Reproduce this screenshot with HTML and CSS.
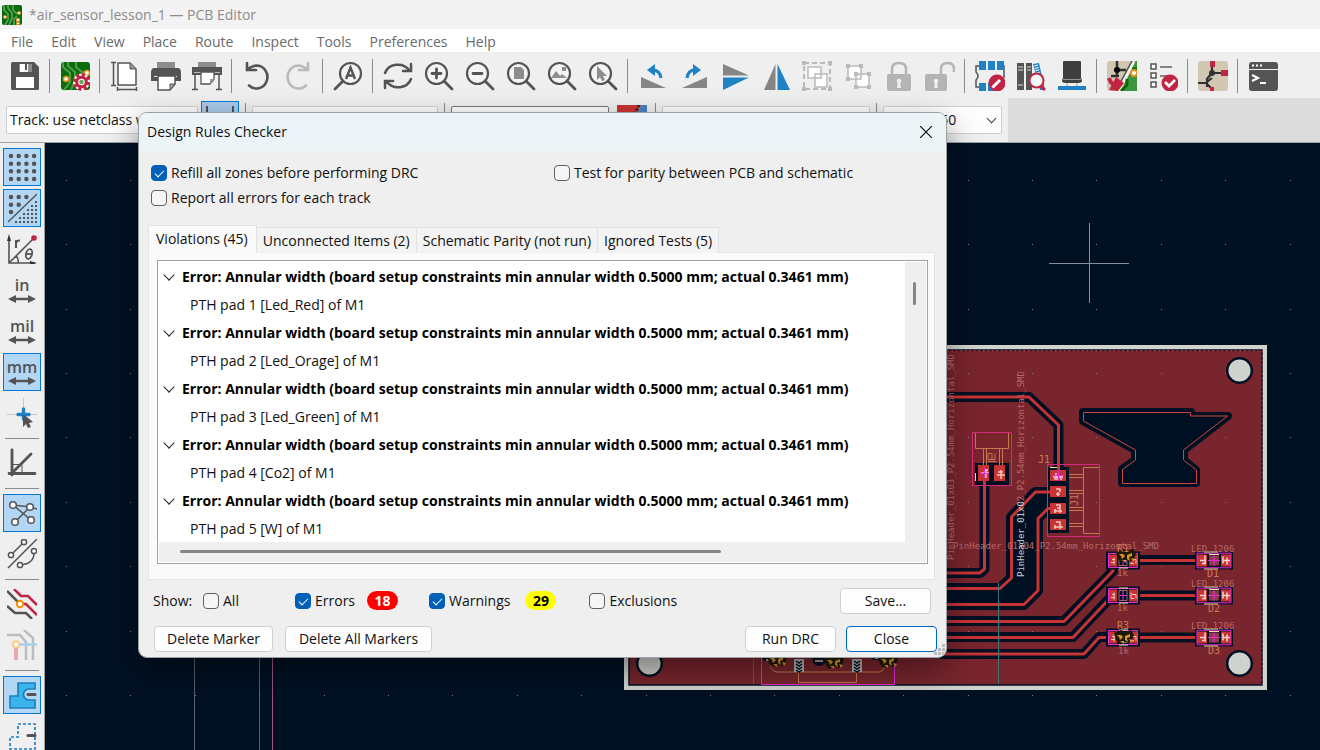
FILE: index.html
```html
<!DOCTYPE html>
<html lang="en">
<head>
<meta charset="utf-8">
<title>*air_sensor_lesson_1 — PCB Editor</title>
<link rel="stylesheet" href="styles.css">
</head>
<body>
<div class="app">
  <header class="titlebar">
    <svg class="app-icon" viewBox="0 0 20 20"><rect width="20" height="20" rx="2" fill="#0b6a0b"/><g fill="none" stroke="#5cab5c" stroke-width="1.5"><path d="M2 0v5l4 4v6l-3 5M6 0v3l4 5v5l-3 7M11 0v5l4 4M12 20v-6l3-3"/></g><g fill="#fff" stroke="#e08a1a"><circle cx="3" cy="12" r="1.5"/><circle cx="17" cy="8" r="1.5"/><path d="M14.500 13.500h3v3h-3zM14.500 17.500h3v2h-3z"/></g></svg>
    <span>*air_sensor_lesson_1 — PCB Editor</span>
  </header>
  <nav class="menubar">
    <button>File</button><button>Edit</button><button>View</button><button>Place</button><button>Route</button><button>Inspect</button><button>Tools</button><button>Preferences</button><button>Help</button>
  </nav>

  <div class="toolbar">
    <button class="tool" aria-label="Save"><svg viewBox="0 0 30 30"><path fill="#545454" fill-rule="evenodd" d="M1 2.500Q1 1 2.500 1H24l5 5v21.500q0 1.500-1.500 1.500h-25Q1 29 1 27.500zM9 3v8h13V3zM6 16v11h18V16z"/><path fill="#fff" d="M6 16h18v11H6z"/><path fill="#8d8d8d" d="M9 3h13v8H9z"/><path fill="#fff" d="M10 3h8v8h-8z"/><path fill="#545454" d="M15 3h2v6h-2z"/></svg></button>
    <span class="sep"></span>
    <button class="tool" aria-label="Board setup"><svg viewBox="0 0 30 30"><rect x="1" y="1" width="29" height="28" rx="3" fill="#0a6d0a"/><g fill="none" stroke="#4f9c4f" stroke-width="2"><path d="M3 1v5l7 6v9l-6 8M8 1v4l7 6v8l-4 10M16 1v5l6 5h8"/></g><g fill="#fff" stroke="#e8941a" stroke-width="1.500"><circle cx="6" cy="18" r="2.500"/><circle cx="27" cy="12" r="2.500"/></g><circle cx="21.500" cy="21" r="8.500" fill="#fff"/><circle cx="21.500" cy="21" r="7" fill="none" stroke="#c22443" stroke-width="3.500" stroke-dasharray="3.200 2.300"/><circle cx="21.500" cy="21" r="4.800" fill="#fff" stroke="#c22443" stroke-width="3"/><circle cx="21.500" cy="21" r="2.300" fill="#65a965"/></svg></button>
    <span class="sep"></span>
    <button class="tool" aria-label="Page settings"><svg viewBox="0 0 30 30"><g fill="none" stroke="#545454"><path fill="#fff" stroke-width="1.500" d="M8 2h12l6 6v16H8z"/><path d="M20 2v6h6" fill="#999"/><path d="M3.500 1v24M1 1.500h5M1 24.500h5M7 28.500h20M7.500 26v4M26.500 26v4" stroke-width="1.500"/></g></svg></button>
    <button class="tool" aria-label="Print"><svg viewBox="0 0 30 30"><path fill="#8d8d8d" d="M6 1h18v6H6z"/><path fill="#545454" d="M0 12q0-5 3-5h24q3 0 3 5v8H0z"/><path d="M3 15.500h23" stroke="#eee"/><path fill="#fff" stroke="#545454" stroke-width="1.500" d="M7 15h17v8l-5 6H7z"/><path fill="#aaa" stroke="#545454" d="M24 23h-5v6z"/></svg></button>
    <button class="tool" aria-label="Plot"><svg viewBox="0 0 30 30"><path fill="#8d8d8d" d="M6 1h18v5H6z"/><path fill="#545454" d="M0 6h30v8H0z"/><path d="M2 11.500h26" stroke="#bbb"/><path fill="none" stroke="#545454" stroke-width="1.500" d="M3 13v16M27 13v16M0 28.500h6M24 28.500h6"/><path fill="#fff" stroke="#545454" stroke-width="1.300" d="M9 11h13v7l-4 5H9z"/><path fill="#999" d="M18 18h4l-4 5z"/></svg></button>
    <span class="sep"></span>
    <button class="tool" aria-label="Undo"><svg viewBox="0 0 30 30"><path fill="none" stroke="#545454" stroke-width="2.600" stroke-linecap="round" d="M5 2v7h9M5 9Q10 4.500 15 4.500a11 11.500 0 1 1-8 20"/></svg></button>
    <button class="tool" aria-label="Redo" disabled><svg viewBox="0 0 30 30"><path fill="none" stroke="#bababa" stroke-width="2.600" stroke-linecap="round" d="M25 2v7h-9M25 9Q20 4.500 15 4.500a11 11.500 0 1 0 8 20"/></svg></button>
    <span class="sep"></span>
    <button class="tool" aria-label="Find"><svg viewBox="0 0 30 30"><circle cx="17.500" cy="12.500" r="10.500" fill="#f4f4f4" stroke="#545454" stroke-width="2.200"/><path stroke="#545454" stroke-width="2.800" stroke-linecap="round" d="M10 20l-8 8"/><path fill="none" stroke="#545454" stroke-width="2.400" d="M13 18l4.500-11.500L22 18M14.500 14.500h6"/></svg></button>
    <span class="sep"></span>
    <button class="tool" aria-label="Refresh"><svg viewBox="0 0 30 30"><g fill="none" stroke="#545454" stroke-width="2.500" stroke-linecap="round"><path d="M2 12A13.500 12 0 0 1 26 9M28 3v7h-8M28 18A13.500 12 0 0 1 4 21M2 27v-7h8"/></g></svg></button>
    <button class="tool" aria-label="Zoom in"><svg viewBox="0 0 30 30"><circle cx="12.500" cy="12.500" r="10.500" fill="#f4f4f4" stroke="#545454" stroke-width="2.200"/><path stroke="#545454" stroke-width="2.800" stroke-linecap="round" d="M20 20l8 8M8 12.500h9M12.500 8v9"/></svg></button>
    <button class="tool" aria-label="Zoom out"><svg viewBox="0 0 30 30"><circle cx="12.500" cy="12.500" r="10.500" fill="#f4f4f4" stroke="#545454" stroke-width="2.200"/><path stroke="#545454" stroke-width="2.800" stroke-linecap="round" d="M20 20l8 8M8 12.500h9"/></svg></button>
    <button class="tool" aria-label="Zoom to fit"><svg viewBox="0 0 30 30"><circle cx="12.500" cy="12.500" r="10.500" fill="#f4f4f4" stroke="#545454" stroke-width="2.200"/><path stroke="#545454" stroke-width="2.800" stroke-linecap="round" d="M20 20l8 8"/><path fill="#8d8d8d" d="M8 6h7l3 3v9H8z"/></svg></button>
    <button class="tool" aria-label="Zoom to objects"><svg viewBox="0 0 30 30"><circle cx="12.500" cy="12.500" r="10.500" fill="#f4f4f4" stroke="#545454" stroke-width="2.200"/><path stroke="#545454" stroke-width="2.800" stroke-linecap="round" d="M20 20l8 8"/><path fill="#8d8d8d" d="M4 17l5-7 4 5 2-2 5 4zM15 6h4v4h-4z"/></svg></button>
    <button class="tool" aria-label="Zoom to selection"><svg viewBox="0 0 30 30"><circle cx="12.500" cy="12.500" r="10.500" fill="#f4f4f4" stroke="#545454" stroke-width="2.200"/><path stroke="#545454" stroke-width="2.800" stroke-linecap="round" d="M20 20l8 8"/><path fill="#8d8d8d" d="M9 5v14l3-3 2 4 3-1-2-4h4z"/></svg></button>
    <span class="sep"></span>
    <button class="tool" aria-label="Rotate counterclockwise"><svg viewBox="0 0 30 30"><path fill="#858585" d="M3 16v11h25z"/><path fill="none" stroke="#1e82c5" stroke-width="3" d="M23 17Q22 9 14 9"/><path fill="#1e82c5" d="M17 3v12l-8-6z"/></svg></button>
    <button class="tool" aria-label="Rotate clockwise"><svg viewBox="0 0 30 30"><path fill="#858585" d="M28 16v11H3z"/><path fill="none" stroke="#1e82c5" stroke-width="3" d="M8 17Q9 9 16 9"/><path fill="#1e82c5" d="M14 3v12l8-6z"/></svg></button>
    <button class="tool" aria-label="Flip vertically"><svg viewBox="0 0 30 30"><path fill="#858585" d="M3 3v11.500h26z"/><path fill="#1e82c5" d="M3 29V16.500h26z"/></svg></button>
    <button class="tool" aria-label="Mirror"><svg viewBox="0 0 30 30"><path fill="#858585" d="M3 29h11.500V3z"/><path fill="#1e82c5" d="M29 29H16.500V3z"/></svg></button>
    <button class="tool" aria-label="Group" disabled><svg viewBox="0 0 30 30"><g fill="#fff" stroke="#bababa" stroke-width="1.500"><path fill="none" stroke-width="2" stroke-dasharray="5 3" d="M2 2h26v26H2z"/><path d="M6 6h13v11H6zM13 13h12v13H13z"/></g><path fill="#bababa" d="M0 0h4v4H0zM26 0h4v4h-4zM0 26h4v4H0zM26 26h4v4h-4z"/></svg></button>
    <button class="tool" aria-label="Ungroup" disabled><svg viewBox="0 0 30 30"><g fill="#fff" stroke="#bababa" stroke-width="1.500"><path d="M5 5h13v13H5zM13 13h13v13H13z"/></g><path fill="#bababa" d="M3 3h4v4H3zM16 3h4v4h-4zM3 16h4v4H3zM11 11h4v4h-4zM24 11h4v4h-4zM11 24h4v4h-4zM24 24h4v4h-4z"/></svg></button>
    <button class="tool" aria-label="Lock" disabled><svg viewBox="0 0 30 30"><path fill="none" stroke="#b4b4b4" stroke-width="2.500" d="M8 15V8q0-6 7-6t7 6v7"/><rect x="3" y="13" width="24" height="17" rx="2" fill="#b4b4b4"/><circle cx="15" cy="20" r="2.300" fill="#eee"/><path fill="#eee" d="M14 20h2l1 7h-4z"/></svg></button>
    <button class="tool" aria-label="Unlock" disabled><svg viewBox="0 0 30 30"><path fill="none" stroke="#b4b4b4" stroke-width="2.500" d="M16 15V8q0-6 6.500-6T29 8v3"/><rect x="0" y="13" width="22" height="17" rx="2" fill="#b4b4b4"/><circle cx="11" cy="20" r="2.300" fill="#eee"/><path fill="#eee" d="M10 20h2l1 7H9z"/></svg></button>
    <span class="sep"></span>
    <button class="tool" aria-label="Footprint editor"><svg viewBox="0 0 30 30"><path fill="none" stroke="#545454" stroke-width="1.500" d="M4 5H1v6q4 4 0 8v7h3M26 5h3v12"/><path fill="#1e82c5" d="M4 0h7v9H4zM13 0h7v9h-7zM22 0h7v9h-7zM4 22h7v8H4zM13 22h7v8h-7z"/><circle cx="22" cy="22" r="8.500" fill="#c22443"/><path stroke="#fff" stroke-width="3" d="M19 25l6-6M17.500 26.500l2-2"/></svg></button>
    <button class="tool" aria-label="Footprint libraries"><svg viewBox="0 0 30 30"><path fill="#545454" d="M1 2h7v27H1zM10 2h6v27h-6z"/><path stroke="#ddd" d="M2 6h5M2 9h5M11 6h4M11 9h4M2 24h5"/><path fill="#1e82c5" d="M17 3l6-1 6 27h-5z"/><path stroke="#fff" stroke-dasharray="1 1.500" stroke-width="4" d="M20 4l2 8"/><circle cx="20.500" cy="19.500" r="7" fill="#f2fafa" stroke="#c22443" stroke-width="2"/><path stroke="#c22443" stroke-width="3" d="M25 25l4 4"/></svg></button>
    <button class="tool" aria-label="3D viewer"><svg viewBox="0 0 30 30"><path fill="#3f3f3f" d="M7 0h16q1 0 1 1v16l1 2q0 3-3 3H8q-3 0-3-3l1-2V1q0-1 1-1z"/><path stroke="#999" d="M6 18.500h18M10 22v4M20 22v4"/><path fill="#1e82c5" d="M1 25h28v4H1z"/></svg></button>
    <span class="sep"></span>
    <button class="tool" aria-label="Update board from schematic"><svg viewBox="0 0 30 30"><rect width="30" height="30" rx="3" fill="#d2c7b0"/><path fill="#3d963d" d="M26 0h4v30H11z"/><path stroke="#f6f6f6" stroke-width="3" d="M27 0L12 30"/><path stroke="#545454" stroke-width="1.500" d="M25 0L12 24"/><path fill="none" stroke="#0b6a0b" stroke-width="3" d="M30 8h-5M20 18v6l-6 6"/><circle cx="27" cy="12" r="3" fill="#fff" stroke="#e8941a" stroke-width="2"/><path stroke="#333" stroke-width="2.500" fill="none" d="M10 0v15M10 9h9M4 15h8"/><circle cx="10" cy="9" r="3"/><path fill="none" stroke="#c22443" stroke-width="4" d="M2 17q2 8 9 6"/><path fill="#c22443" d="M9 16l8 6-6 8-9-1z"/></svg></button>
    <button class="tool" aria-label="Design rules checker"><svg viewBox="0 0 30 30"><path fill="#fff" stroke="#545454" stroke-width="1.500" d="M3 3h5v5H3zM3 12h5v5H3zM3 21h5v5H3z"/><path stroke="#858585" stroke-width="2" d="M12 6h12M12 15h7"/><circle cx="22" cy="22" r="8.500" fill="#c22443"/><path fill="none" stroke="#fff" stroke-width="2.700" d="M17 21l4 4 6-6"/></svg></button>
    <span class="sep"></span>
    <button class="tool" aria-label="Schematic editor"><svg viewBox="0 0 30 30"><rect width="30" height="30" rx="3" fill="#d2c7b0"/><path stroke="#333" stroke-width="2.200" fill="none" d="M14 0v12l-5 6v8M14 12h16M0 22h9M9 21l5-4M9 23l5 5"/><circle cx="14" cy="12" r="3" fill="#333"/><path fill="#c22443" d="M12 0h5v6h-5zM23 9h7v6h-7zM12 26h4v4h-4z"/></svg></button>
    <span class="sep"></span>
    <button class="tool" aria-label="Scripting console"><svg viewBox="0 0 30 30"><rect x="1" y="1" width="29" height="29" rx="3" fill="#545454"/><path stroke="#eee" d="M1 8.500h29"/><path fill="none" stroke="#fff" stroke-width="2" d="M4 14l6 3-6 3M12 22h6"/><path stroke="#fff" stroke-width="2" stroke-dasharray="2 2" d="M4 4.500h10"/></svg></button>
  </div>

  <div class="auxbar">
    <div class="aux-inner">
      <span class="drop w-track"><select aria-label="Track width"><option>Track: use netclass width</option></select></span>
      <button class="aux-toggle" aria-label="Auto track width"><svg viewBox="0 0 30 30"><path stroke="#545454" stroke-width="2" d="M2 1v28M28 1v28"/></svg></button>
      <span class="aux-sep"></span>
      <span class="drop w-via"><select aria-label="Via size"><option>Via: use netclass sizes</option></select></span>
      <span class="aux-sep"></span>
      <span class="drop w-layer"><select aria-label="Layer"><option>▇ F.Cu (PgUp)</option></select></span>
      <button class="layer-pair" aria-label="Layer pair"><svg viewBox="0 0 30 30"><path fill="#c83434" d="M0 0h24L10 30H0z"/><path fill="#4d7fc4" d="M24 0h6v30H10z"/><path stroke="#222" stroke-dasharray="2 2" stroke-width="3" d="M22 0L8 30"/></svg></button>
      <span class="aux-sep"></span>
      <span class="drop w-grid"><select aria-label="Grid"><option>Grid: 1.2700 mm</option></select></span>
      <span class="aux-sep"></span>
      <span class="drop w-zoom"><select aria-label="Zoom"><option>Zoom 3.50</option></select></span>
    </div>
  </div>

  <main class="workspace">
    <aside class="sidebar">
      <button class="tool on" aria-label="Show grid"><svg viewBox="0 0 30 30"><path stroke="#545454" stroke-width="4.500" stroke-linecap="round" stroke-dasharray="0 7.700" d="M4 4h24M4 11.700h24M4 19.300h24M4 27h24"/></svg></button>
      <button class="tool on" aria-label="Grid overrides"><svg viewBox="0 0 30 30"><path stroke="#545454" stroke-width="4.500" stroke-linecap="round" stroke-dasharray="0 7.700" d="M4 4h16M4 11.700h9M4 19h1"/><path stroke="#545454" stroke-width="1.300" d="M1 29L30 1"/><path stroke="#545454" stroke-width="2" stroke-dasharray="2 2" d="M28 9h2M24 13h6M20 17h10M16 21h14M12 25h18M8 29h22"/></svg></button>
      <button class="tool" aria-label="Polar coordinates"><svg viewBox="0 0 30 30"><path fill="none" stroke="#545454" stroke-width="1.600" d="M2 3v26h26M2 29L26 5M9 22q3 2 2 7"/><path fill="#333" d="M2 0l2 7H0zM30 29l-7-2v4z"/><circle cx="27" cy="4" r="2.800" fill="#c22443"/><path fill="none" stroke="#545454" stroke-width="2" d="M9 14V6M9 9q1-3 4-2.500"/><ellipse cx="22" cy="20" rx="3" ry="5" transform="rotate(15 22 20)" fill="none" stroke="#545454" stroke-width="1.800"/><path stroke="#545454" stroke-width="1.800" d="M19 20h6"/></svg></button>
      <button class="tool unit" aria-label="Inches"><span>in</span><svg viewBox="0 0 30 10"><path stroke="#545454" stroke-width="2.500" d="M4 5h22"/><path fill="#545454" d="M1 5l8-4v8zM29 5l-8-4v8z"/></svg></button>
      <button class="tool unit" aria-label="Mils"><span>mil</span><svg viewBox="0 0 30 10"><path stroke="#545454" stroke-width="2.500" d="M4 5h22"/><path fill="#545454" d="M1 5l8-4v8zM29 5l-8-4v8z"/></svg></button>
      <button class="tool unit on" aria-label="Millimetres"><span>mm</span><svg viewBox="0 0 30 10"><path stroke="#545454" stroke-width="2.500" d="M4 5h22"/><path fill="#545454" d="M1 5l8-4v8zM29 5l-8-4v8z"/></svg></button>
      <button class="tool" aria-label="Full-window crosshair"><svg viewBox="0 0 30 30"><path stroke="#c8c8c8" d="M16.500 0v16M0 16.500h30"/><path stroke="#1e82c5" stroke-width="3.400" stroke-linecap="round" d="M16.500 11v10M11 16.500h11"/><path fill="#545454" d="M16 16v13l3-3 2 4 3-1-2-4 4-1z"/></svg></button>
      <span class="hsep"></span>
      <button class="tool" aria-label="45 degree limit"><svg viewBox="0 0 30 30"><path fill="none" stroke="#545454" stroke-width="2.800" stroke-linecap="round" d="M5 2v25M2 25.500h26M5 25L24 6"/><path fill="none" stroke="#545454" d="M6 16.500h9v9"/></svg></button>
      <span class="hsep"></span>
      <button class="tool on" aria-label="Show ratsnest"><svg viewBox="0 0 30 30"><g fill="#fff" stroke="#545454" stroke-width="1.500"><path d="M6 7l17 2 7 2M6 7l18 15M23 9L8 24"/><circle cx="6" cy="7" r="3.300"/><circle cx="23" cy="9" r="3.300"/><circle cx="24" cy="22" r="3.300"/><circle cx="8" cy="24" r="3.300"/></g></svg></button>
      <button class="tool" aria-label="Curved ratsnest"><svg viewBox="0 0 30 30"><g fill="none" stroke="#545454" stroke-width="1.500"><path d="M1 29L30 0M4 16L17 3M27 12q1 13-14 14"/><g fill="#fff"><circle cx="4" cy="16" r="2.600"/><circle cx="17" cy="3" r="2.600"/><circle cx="27" cy="12" r="2.600"/><circle cx="13" cy="26" r="2.600"/></g></g></svg></button>
      <span class="hsep"></span>
      <button class="tool" aria-label="High contrast"><svg viewBox="0 0 30 30"><path fill="none" stroke="#545454" stroke-width="2.500" d="M0 2l13 13M0 17l8 7h11l6 6"/><path fill="none" stroke="#c22443" stroke-width="2.500" d="M7 0l7 7h7l9 9M13 15h6l11 11"/><circle cx="13" cy="15" r="3.200" fill="#fff" stroke="#f39200" stroke-width="2"/></svg></button>
      <button class="tool" aria-label="Net highlighting" disabled><svg viewBox="0 0 30 30"><g fill="none" stroke="#bcbcbc" stroke-width="2.500"><path d="M0 5h13l6 7v18M17 0l9 8v22"/></g><path stroke="#e8a6b2" stroke-width="4" d="M9 18v12"/><path stroke="#a8d0ea" stroke-width="2.500" d="M12 14.500h18"/><circle cx="9" cy="14.500" r="3.200" fill="#fff" stroke="#fbc97c" stroke-width="2"/></svg></button>
      <span class="hsep"></span>
      <button class="tool on" aria-label="Zone fills"><svg viewBox="0 0 30 30"><path fill="#3ab4ea" stroke="#1e7fc0" stroke-width="1.700" d="M11 3h17v6h-6a5.500 5.500 0 0 0 0 11h6v8H3V16h8z"/><path stroke="#545454" stroke-width="3" stroke-linecap="round" d="M21 14.500h7"/></svg></button>
      <button class="tool" aria-label="Zone outlines"><svg viewBox="0 0 30 30"><path fill="none" stroke="#1e7fc0" stroke-width="1.700" stroke-dasharray="3 2" d="M11 3h17v25H3V16h8z"/><path stroke="#545454" stroke-width="3" stroke-linecap="round" d="M21 14.500h7"/></svg></button>
    </aside>

    <svg class="board" viewBox="45 143 1275 607" preserveAspectRatio="xMinYMin slice">
      <defs>
        <g id="pads" fill="#c83434">
          <path fill="#001023" d="M-17-9h34v18h-34z"/>
          <path d="M-14-6h8V6h-8zM6-6h8V6H6z"/>
          <path fill="none" stroke="#e62ad8" d="M-14.500-7h29V7h-29z"/>
          <path fill="none" stroke="#e8e0a0" d="M-4-7.500h9M-4 7.500h9"/>
          <path fill="none" stroke="#f0c8c0" d="M-12 2h4M-9-3v7M-11-1h3M8-3v6h3M9-1h4v4"/>
          <path fill="none" stroke="#a06a62" stroke-width="1" d="M-4-5h8V5h-8z"/>
          <path stroke="#e62ad8" stroke-width="1" d="M-4 0h8M0-5V5"/>
        </g>
        <g id="led" fill="#c83434">
          <path fill="#001023" d="M-19-9h38v18h-38z"/>
          <path d="M-17-6h10V6h-10zM7-6h10V6H7z"/>
          <path fill="#8a3b45" d="M-5-5H5V5H-5z"/>
          <path fill="none" stroke="#e62ad8" d="M-17-7.300h34v14.600h-34z"/>
          <path fill="none" stroke="#e8e0a0" d="M-10-8.500h14M-10 8.500h14M-5-6H5"/>
          <path fill="none" stroke="#f4d4cc" stroke-width="1.500" d="M-14 0h6M-9-5V4M-12 3h4M9-4v7M9 0h7M13-3v7"/>
          <path stroke="#e62ad8" stroke-width="1.200" d="M-6 0H6M0-5V5"/>
        </g>
        <g id="mark"><path fill="#1d1a08" d="M-10-5l7-3 4 2 6-2 3 5-2 5-3 3-5-2-5 3-3-4z"/><path fill="#d8962a" d="M-7-3h4l2 2-3 3-1-3zM1-2l5-2v3l-3 1 1 4-3-2zM-4 3h4v3zM5 1l4 1-2 3z"/></g>
      </defs>
      <rect x="45" y="143" width="1275" height="607" fill="#001023"/>
      <g fill="none" shape-rendering="crispEdges">
        <path stroke="#59616c" d="M194.500 640v110M259.500 640v110"/>
        <path stroke="#a3577c" d="M272.500 640v110"/>
      </g>
      <rect x="626.500" y="347.500" width="638" height="340" fill="#78252d" stroke="#d0d2cd" stroke-width="5"/>
      <path fill="none" stroke="#001023" stroke-width="1.500" d="M629 350h633v335H629z"/>
      <path fill="none" stroke="#b43a3e" stroke-dasharray="1.500 3" d="M947 350.500h315v334"/>
      <path fill="none" stroke="#78808a" shape-rendering="crispEdges" stroke-dasharray="1 63.400" d="M66 180.500h1254M66 244.500h1254M66 309.500h1254M66 373.500h1254M66 437.500h1254M66 502.500h1254M66 566.500h1254M66 631.500h1254M66 695.500h1254"/>
      <path fill="none" stroke="#87909a" shape-rendering="crispEdges" d="M1049 263.500h80M1089.500 223v80"/>

      <g fill="none" stroke="#001023" stroke-width="10" stroke-linejoin="round">
        <path d="M940 397h89l29.500 28v50M984.500 475v94l-4 4H940"/>
        <path fill="#001023" d="M940 588h60l11-10v-61l24-25h15v16l-12 10v73l-14 14h-84z"/>
        <path d="M1113 562v9l-49 50H940M1112 596l-39 41H940M1112 637h-13l-15 17H940M1125 560h85M1125 595.500h85M1125 637.500h85"/>
      </g>
      <path fill="#001023" stroke="#001023" stroke-width="8" stroke-linejoin="round" d="M1083 412h108v4h37l-44 34v10l12 10v13h-74v-14l13-9v-10l-52-29z"/>
      <path fill="none" stroke="#d04440" d="M1083.500 412.500h107v3.500h37l-44 34v10l13 10v13.500h-74v-14l13-9.500v-10l-52-29z"/>
      <path fill="#001023" d="M975 463h34v22h-34zM1047 467h22v66h-22z"/>
      <g fill="none" stroke="#c83434" stroke-width="3" stroke-linejoin="round">
        <path d="M940 397h89l29.500 28v50M984.500 475v94l-5 4H940"/>
        <path d="M940 588.500h60l11.500-10.500v-61l24-25h16M1052 508.500h-4l-10 10v72l-14 14h-84"/>
        <path d="M1113 562v9l-49 50.500H940M1112 596l-39 41.500H940M1112 637.500h-13l-15 16.500H940M1125 560.500h85M1125 595.500h85M1125 637.500h85"/>
      </g>
      <g fill="#d0d2cd" stroke="#001023" stroke-width="2.500"><circle cx="1239.500" cy="370.500" r="12.300"/><circle cx="1239.500" cy="663.500" r="12.300"/><circle cx="649.500" cy="663.500" r="12.300"/></g>

      <path fill="#c83434" d="M978 465h11v16h-11zM994 465h11v16h-11zM1050 470h16v11h-16zM1050 486h16v11h-16zM1050 503h16v11h-16zM1050 519h16v11h-16z"/>
      <g fill="none" stroke="#c87850">
        <path d="M975.500 432.500h33v16h-33zM983.500 449v16M986.500 449v16M999.500 449v16M1002.500 449v16M988 459.500v-6h4v6h-4M995 453.500v6h-4M988 461.500h8"/>
        <path d="M1083.500 467.500h16v66h-16zM1069 474.500h14M1069 477.500h14M1069 490.500h14M1069 493.500h14M1069 507.500h14M1069 510.500h14M1069 523.500h14M1069 526.500h14"/>
      </g>
      <g fill="none" stroke="#d6297b"><path d="M972.500 432.500h39v53h-39zM1047.500 464.500h52v72h-52z"/></g>
      <path fill="none" stroke="#f0c8c0" stroke-width="1.500" d="M986 469v9M981 473h8M985 470h3M997 475h8M1001 470v9M998 472h5M1053 477h10M1056 473v5M1061 476v4M1054 479h4M1056 489h4v3M1058 492v4M1056 494h4M1056 505h4v3h-3M1054 511h8M1055 509v4M1060 508v5M1056 522h4v3M1054 527h9M1055 525v4M1060 525v4"/>
      <path stroke="#e62ad8" d="M980 473.500h9M984.500 468v10M1053 475.500h11M1058.500 470v11"/>
      <path stroke="#e8e0a0" d="M1050 467.500h7M975.500 473v8"/>
      <path stroke="#38767d" d="M998.500 583v101"/>

      <use href="#pads" x="1123" y="560.500"/><use href="#pads" x="1123" y="595.500"/><use href="#pads" x="1123" y="637.500"/>
      <use href="#led" x="1214" y="560.500"/><use href="#led" x="1214" y="595.500"/><use href="#led" x="1214" y="637.500"/>
      <use href="#mark" x="1126" y="557"/><use href="#mark" x="1124" y="638"/>

      <g class="silk">
        <text x="953" y="549">PinHeader_01x04_P2.54mm_Horizontal_SMD</text>
        <text transform="translate(954 560) rotate(-90)">PinHeader_01x03_P2.54mm_Horizontal_SMD</text>
        <text transform="translate(1024 577) rotate(-90)"><tspan class="lit">PinHeader_01x0</tspan>2_P2.54mm_Horizontal_SMD</text>
        <text x="1191" y="552">LED_1206</text><text x="1191" y="587">LED_1206</text><text x="1191" y="629">LED_1206</text>
        <text x="1117" y="576">1k</text><text x="1117" y="611">1k</text><text x="1118" y="654">1k</text>
        <g class="refdes"><text x="1038" y="463">J1</text><text x="1117" y="552">R1</text><text x="1117" y="629">R3</text><text x="1207" y="577">D1</text><text x="1208" y="612">D2</text><text x="1208" y="654">D3</text><text transform="translate(1078 506) rotate(-90)">J1</text></g>
      </g>

      <g fill="none">
        <path stroke="#59616c" d="M753.500 650v34"/>
        <path stroke="#c87850" d="M771 650v18q2 4 6 4h103q4-1 4-6v-16M798.500 672v10.500h58V672"/>
        <path stroke="#e62ad8" d="M761.500 650v34.500h133V650"/>
        <path fill="#aeb2b0" d="M794 659h10v13h-10zM852 659h10v13h-10z"/>
        <path stroke="#001023" stroke-width="1.500" d="M796 661l3 2 3-2M796 664l3 2 3-2M796 667l3 2 3-2M796 670l3 2 3-2M854 661l3 2 3-2M854 664l3 2 3-2M854 667l3 2 3-2M854 670l3 2 3-2"/>
        <path fill="#001023" d="M758 650h24l-6 11h-12zM812 652h16q-1 14-9 14t-7-14zM868 652h18l-5 8h-8z"/>
        <path stroke="#f0c8c0" stroke-width="1.500" d="M766 660h10M815 661h8M875 658h8"/>
      </g>
      <use href="#mark" x="777" y="661"/><use href="#mark" x="834" y="663"/><use href="#mark" x="888" y="662"/>
    </svg>
  </main>

  <section class="dialog" role="dialog" aria-labelledby="dlg-title">
    <header class="dlg-head"><h1 id="dlg-title">Design Rules Checker</h1><button aria-label="Close dialog"><svg viewBox="0 0 12 12"><path stroke="#111" stroke-width="1.200" d="M0 0l12 12M12 0L0 12"/></svg></button></header>
    <div class="dlg-body">
      <div class="options">
        <label><input type="checkbox" checked>Refill all zones before performing DRC</label>
        <label><input type="checkbox">Test for parity between PCB and schematic</label>
        <label><input type="checkbox">Report all errors for each track</label>
      </div>
      <div class="tabs" role="tablist">
        <button role="tab" aria-selected="true">Violations (45)</button><button role="tab">Unconnected Items (2)</button><button role="tab">Schematic Parity (not run)</button><button role="tab">Ignored Tests (5)</button>
      </div>
      <div class="panel">
        <div class="list">
          <ul class="rows">
            <li><b>Error: Annular width (board setup constraints min annular width 0.5000 mm; actual 0.3461 mm)</b><span>PTH pad 1 [Led_Red] of M1</span></li>
            <li><b>Error: Annular width (board setup constraints min annular width 0.5000 mm; actual 0.3461 mm)</b><span>PTH pad 2 [Led_Orage] of M1</span></li>
            <li><b>Error: Annular width (board setup constraints min annular width 0.5000 mm; actual 0.3461 mm)</b><span>PTH pad 3 [Led_Green] of M1</span></li>
            <li><b>Error: Annular width (board setup constraints min annular width 0.5000 mm; actual 0.3461 mm)</b><span>PTH pad 4 [Co2] of M1</span></li>
            <li><b>Error: Annular width (board setup constraints min annular width 0.5000 mm; actual 0.3461 mm)</b><span>PTH pad 5 [W] of M1</span></li>
          </ul>
          <div class="vscroll"><i></i></div>
          <div class="hscroll"><i></i></div>
        </div>
      </div>
      <div class="filters">
        <span class="show">Show:</span>
        <label class="f-all"><input type="checkbox">All</label>
        <label><input type="checkbox" checked>Errors</label><span class="badge red">18</span>
        <label><input type="checkbox" checked>Warnings</label><span class="badge yellow">29</span>
        <label><input type="checkbox">Exclusions</label>
        <button class="btn save">Save...</button>
      </div>
      <div class="actions">
        <button class="btn del">Delete Marker</button><button class="btn delall">Delete All Markers</button>
        <button class="btn run">Run DRC</button><button class="btn primary">Close</button>
      </div>
    </div>
    <svg class="grip" viewBox="0 0 12 12"><path fill="#bdbdbd" d="M8 0h3v3H8zM4 4h3v3H4zM8 4h3v3H8zM0 8h3v3H0zM4 8h3v3H4zM8 8h3v3H8z"/></svg>
  </section>
</div>
</body>
</html>
```
FILE: styles.css
```css
* { box-sizing: border-box; }
body { margin: 0; font: 14px/20px "Open Sans", "Noto Sans", sans-serif; color: #111; background: #efefef; }
button, select, input { font: inherit; color: inherit; margin: 0; }
button { border: 0; padding: 0; background: none; }
svg { display: block; }
.app { display: flex; flex-direction: column; height: 100vh; overflow: hidden; position: relative; }

.titlebar { display: flex; align-items: center; gap: 7px; height: 29px; flex: none; padding: 0 2px; background: #f3f3f3; color: #8c8c8c; }
.app-icon { width: 20px; height: 20px; }
.menubar { display: flex; gap: 18px; height: 23px; flex: none; padding: 2px 11px 0; background: #fff; color: #6a6a6a; line-height: 20px; }

.toolbar { display: flex; align-items: center; gap: 3px; height: 46px; flex: none; padding: 2px 6px 0; }
.tool { width: 38px; height: 38px; flex: none; display: flex; flex-direction: column; align-items: center; justify-content: center; border: 1px solid transparent; }
.tool svg { width: 30px; height: 30px; }
.tool.on { background: #b3d6f4; border-color: #0078d7; }
.sep { width: 6px; height: 34px; flex: none; border-left: 1px solid #8a8a8a; margin-left: 2px; margin-right: -2px; }

.auxbar { height: 45px; flex: none; background: #dcdcdc; border-bottom: 1px solid #a0a0a0; display: flex; }
.aux-inner { display: flex; align-items: center; gap: 6px; padding: 0 6px; background: #efefef; }
.drop { position: relative; flex: none; height: 28px; }
.drop select { appearance: none; width: 100%; height: 28px; padding: 0 3px; border: 1px solid #d0d0d0; border-radius: 2px; background: #fdfdfd; }
.drop::after { content: ""; position: absolute; right: 7px; top: 9px; width: 6px; height: 6px; border: solid #444; border-width: 0 1px 1px 0; transform: rotate(45deg); }
.w-track { width: 192px; }
.w-via { width: 186px; }
.w-layer { width: 158px; }
.w-layer select { border-color: #777; }
.w-grid { width: 208px; }
.w-zoom { width: 119px; }
.aux-toggle { width: 38px; height: 38px; padding: 3px; background: #a9c9e8; border: 1px solid #0078d7; margin-left: -3px; }
.layer-pair { width: 30px; height: 30px; margin: 0 2px; }
.aux-sep { width: 1px; height: 34px; background: #8a8a8a; }

.workspace { flex: 1; min-height: 0; display: flex; }
.sidebar { width: 45px; flex: none; display: flex; flex-direction: column; gap: 3px; padding: 5px 3px 0; border-right: 1px solid #a0a0a0; overflow: hidden; }
.hsep { height: 6px; flex: none; margin: -2px 2px 2px; border-bottom: 1px solid #8a8a8a; }
.unit span { font: 600 16px/18px "Open Sans", sans-serif; color: #545454; }
.unit svg { width: 30px; height: 10px; }
.board { flex: 1; min-width: 0; height: 100%; }
.silk { font: 9px "DejaVu Sans Mono", monospace; fill: #b8686a; }
.lit { fill: #c8cccb; }
.refdes { fill: #cd7a56; font-size: 10px; }

.dialog { position: absolute; left: 138px; top: 112px; width: 809px; border: 1px solid #9aa0a4; border-radius: 9px; background: #efefef; box-shadow: 0 12px 32px rgba(0, 0, 0, .42); overflow: clip; }
.dlg-head { display: flex; justify-content: space-between; align-items: center; height: 38px; padding: 0 14px 0 8px; background: #ecf4f8; }
.dlg-head h1 { margin: 0; font-size: 14px; font-weight: 400; }
.dlg-head svg { width: 12px; height: 12px; }
.dlg-body { padding: 10px 11px 5px 9px; }
.options { display: grid; grid-template-columns: 403px 1fr; row-gap: 5px; padding: 2px 3px 17px; }
label { display: flex; align-items: center; gap: 4px; height: 20px; white-space: nowrap; }
input[type=checkbox] { appearance: none; width: 16px; height: 16px; border: 1px solid #606060; border-radius: 4px; background: #f6f6f6; display: grid; place-items: center; }
input[type=checkbox]:checked { background: #0060b8; border-color: #0060b8; }
input[type=checkbox]:checked::after { content: ""; width: 4px; height: 8px; border: solid #fff; border-width: 0 1px 1px 0; transform: translateY(-1px) rotate(45deg); }

.tabs { display: flex; align-items: flex-end; height: 28px; }
.tabs button { height: 26px; padding: 1px 6px 0; border: 1px solid #e2e2e2; border-left: 0; border-bottom: 0; background: #f3f3f3; white-space: nowrap; }
.tabs button[aria-selected] { height: 28px; padding: 0 8px 1px 7px; border-left: 1px solid #e2e2e2; background: #fafafa; position: relative; }
.panel { margin-top: -1px; padding: 7px 6px 15px 8px; border: 1px solid #e2e2e2; background: #fafafa; }
.list { display: grid; grid-template-columns: 1fr 21px; grid-template-rows: 280px 20px; border: 1px solid #a0a0a6; background: #fff; padding: 1px; }
.rows { margin: 0; padding: 1px 0 0; list-style: none; overflow: hidden; line-height: 28px; white-space: nowrap; }
.rows li { position: relative; }
.rows li::before { content: ""; position: absolute; left: 6px; top: 8px; width: 7px; height: 7px; border: solid #222; border-width: 0 1px 1px 0; transform: rotate(45deg); }
.rows b, .rows span { display: block; height: 28px; }
.rows b { padding-left: 23px; color: #000; }
.rows span { padding-left: 31px; }
.vscroll { background: #efefef; padding: 20px 0 0 8px; }
.vscroll i { display: block; width: 3px; height: 23px; border-radius: 2px; background: #858585; }
.hscroll { grid-column: span 2; background: #efefef; padding: 8px 205px 0 21px; }
.hscroll i { display: block; height: 3px; border-radius: 2px; background: #858585; }

.filters { display: flex; align-items: center; height: 26px; margin-top: 8px; padding: 0 4px 0 5px; }
.filters .show { width: 50px; }
.filters .f-all { width: 92px; }
.badge { width: 31px; height: 19px; border-radius: 10px; font-weight: 700; text-align: center; line-height: 19px; margin: -2px 0 0 12px; }
.badge + label { margin-left: 31px; }
.yellow + label { margin-left: 33px; }
.red { background: #f00; color: #fff; }
.yellow { background: #ff0; color: #000; margin-left: 15px; }
.btn { height: 26px; border: 1px solid #d0d0d0; border-radius: 4px; background: #fdfdfd; white-space: nowrap; }
.save, .run, .primary { width: 91px; }
.save { margin-left: auto; }
.primary { border-color: #0067c0; margin-right: -2px; }
.actions { display: flex; margin-top: 12px; padding-left: 6px; }
.del { width: 119px; }
.delall { width: 147px; margin-left: 12px; }
.run { margin-left: auto; margin-right: 10px; }
.grip { position: absolute; right: 0; bottom: 1px; width: 12px; height: 12px; }
```
